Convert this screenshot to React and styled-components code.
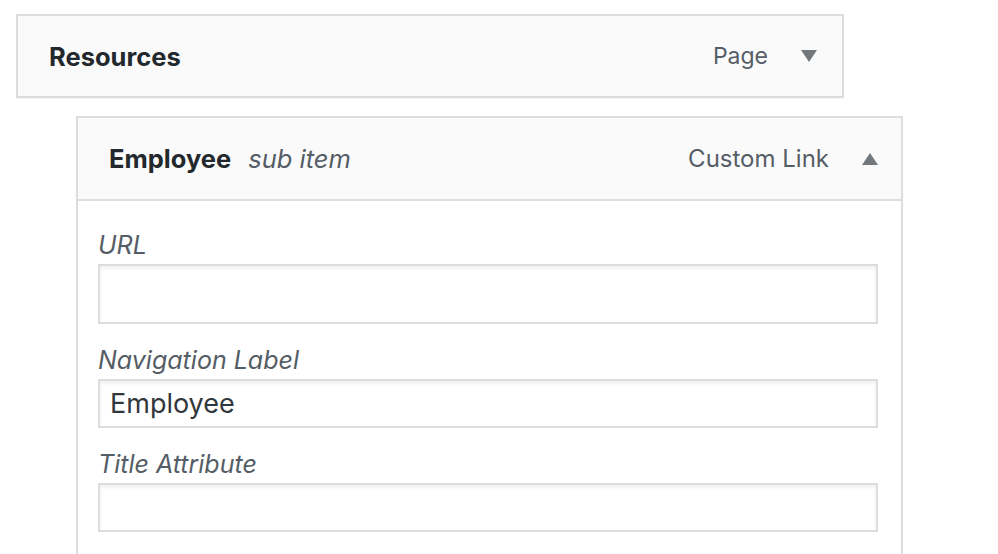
import React from "react";
import styled, { createGlobalStyle } from "styled-components";

const GlobalStyle = createGlobalStyle`
  html, body {
    margin: 0;
    padding: 0;
    background: #fff;
    font-family: Inter, "Liberation Sans", Arial, sans-serif;
    color: #23282d;
  }
`;

const Page = styled.div`
  padding: 14px 0 0 16px;
  display: flex;
  flex-direction: column;
  gap: 18px;
`;

const MenuItem = styled.div`
  width: ${(p) => p.width}px;
  margin-left: ${(p) => p.indent || 0}px;
  box-sizing: border-box;
  border: 2px solid #dddddd;
  background: #fff;
  box-shadow: 0 1px 1px rgba(0, 0, 0, 0.04);
`;

const Handle = styled.div`
  display: flex;
  align-items: center;
  height: ${(p) => p.height}px;
  box-sizing: border-box;
  padding: 0 ${(p) => p.right || 25}px 0 31px;
  background: #fafafa;
  border-bottom: ${(p) => (p.open ? "2px solid #dddddd" : "none")};
`;

const Title = styled.span`
  font-weight: 700;
  font-size: 25.5px;
  color: #23282d;
`;

const SubItem = styled.span`
  margin-left: 17px;
  font-style: italic;
  font-size: 25.5px;
  color: #555d66;
`;

const Controls = styled.div`
  margin-left: auto;
  display: flex;
  align-items: center;
  gap: 33px;
`;

const ItemType = styled.span`
  font-size: ${(p) => p.size || 24}px;
  color: #555d66;
`;

const Arrow = styled.svg`
  width: 16px;
  height: 12px;
  fill: #72777c;
`;

const Settings = styled.div`
  padding: 29px 23px 40px 20px;
  display: flex;
  flex-direction: column;
  gap: 21px;
`;

const Field = styled.label`
  display: flex;
  flex-direction: column;
  gap: 4px;
`;

const Label = styled.span`
  font-style: italic;
  font-size: 25px;
  line-height: 30px;
  color: #555d66;
`;

const Input = styled.input`
  box-sizing: border-box;
  width: 100%;
  height: ${(p) => p.h}px;
  margin: 0;
  padding: 0 10px;
  border: 2px solid #dddddd;
  border-radius: 0;
  box-shadow: inset 0 2px 4px rgba(0, 0, 0, 0.07);
  background: #fff;
  font-family: Inter, "Liberation Sans", Arial, sans-serif;
  font-size: 27px;
  color: #32373c;
  outline: none;
`;

const ArrowIcon = ({ up }) => (
  <Arrow viewBox="0 0 16 12">
    {up ? <polygon points="8,0 16,12 0,12" /> : <polygon points="0,0 16,0 8,12" />}
  </Arrow>
);

export default function App() {
  return (
    <>
      <GlobalStyle />
      <Page>
        <MenuItem width={828}>
          <Handle height={80}>
            <Title>Resources</Title>
            <Controls>
              <ItemType size={23}>Page</ItemType>
              <ArrowIcon />
            </Controls>
          </Handle>
        </MenuItem>

        <MenuItem width={827} indent={60}>
          <Handle height={83} right={23} open>
            <Title>Employee</Title>
            <SubItem>sub item</SubItem>
            <Controls>
              <ItemType>Custom Link</ItemType>
              <ArrowIcon up />
            </Controls>
          </Handle>
          <Settings>
            <Field>
              <Label>URL</Label>
              <Input h={60} defaultValue="" />
            </Field>
            <Field>
              <Label>Navigation Label</Label>
              <Input h={49} defaultValue="Employee" />
            </Field>
            <Field>
              <Label>Title Attribute</Label>
              <Input h={49} defaultValue="" />
            </Field>
          </Settings>
        </MenuItem>
      </Page>
    </>
  );
}
